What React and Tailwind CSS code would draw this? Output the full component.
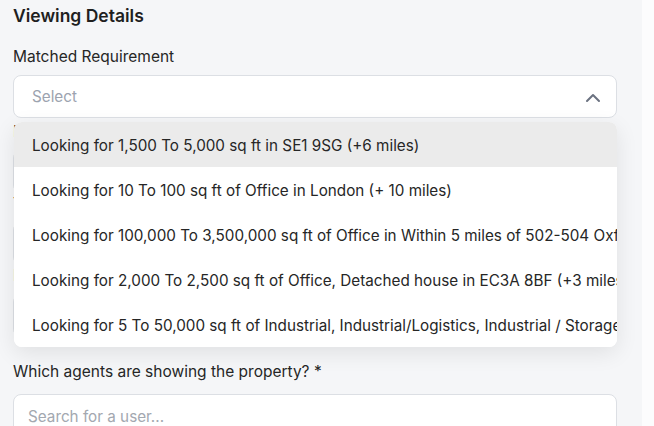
import React from 'react'
import { ChevronUp } from 'lucide-react'

const options = [
  'Looking for 1,500 To 5,000 sq ft in SE1 9SG (+6 miles)',
  'Looking for 10 To 100 sq ft of Office in London (+ 10 miles)',
  'Looking for 100,000 To 3,500,000 sq ft of Office in Within 5 miles of 502-504 Oxford Street, London',
  'Looking for 2,000 To 2,500 sq ft of Office, Detached house in EC3A 8BF (+3 miles)',
  'Looking for 5 To 50,000 sq ft of Industrial, Industrial/Logistics, Industrial / Storage, Warehouse'
]

const MatchedRequirementSelect = () => {
  const active = 0

  return (
    <div className="relative">
      <button className="flex h-[43px] w-full items-center justify-between rounded-lg border border-[#dcdfe4] bg-white pl-[18px] pr-[11px] pt-[2px] text-left">
        <span className="text-[15.25px] text-[#9ca3af]">Select</span>
        <ChevronUp size={24} strokeWidth={2} className="text-[#6b7280]" />
      </button>
      <ul className="absolute left-[1px] right-0 top-[47px] z-10 overflow-hidden rounded-lg bg-white shadow-[0_6px_22px_rgba(0,0,0,0.09)]">
        {options.map((option, i) => (
          <li
            key={option}
            className={`flex h-[45px] items-center overflow-hidden whitespace-nowrap pl-[18px] pt-[3px] text-[15.25px] text-[#262626] ${i === active ? 'bg-[#ebebeb]' : 'bg-white'}`}
          >
            {option}
          </li>
        ))}
      </ul>
    </div>
  )
}

const Field = ({ label }) => (
  <div>
    <label className="block text-[15.5px] leading-[22px] text-[#262626]">{label}</label>
    <div className="mt-[7px] h-[43px] rounded-lg border border-[#dcdfe4] bg-white" />
  </div>
)

export default function App() {
  return (
    <div
      className="flex h-[426px] w-[654px] overflow-hidden bg-[#fcfcfd]"
      style={{ fontFamily: 'Inter, "Noto Sans", sans-serif' }}
    >
      <div className="w-[642px] shrink-0 bg-[#f5f6f8] pl-[13px] pr-[25px] pt-[4px]">
        <h2 className="text-[17.5px] font-semibold leading-[24px] text-[#1f1f1f]">Viewing Details</h2>

        <div className="mt-[18px]">
          <label className="block text-[15.5px] leading-[22px] text-[#262626]">Matched Requirement</label>
          <div className="mt-[7px]">
            <MatchedRequirementSelect />
          </div>
        </div>

        <div className="mt-[3px]">
          <Field label="Date" />
          <Field label="Time" />
          <Field label="Duration" />
        </div>

        <div className="mt-[24px]">
          <label className="block text-[15.5px] leading-[22px] text-[#262626]">
            Which agents are showing the property? *
          </label>
          <input
            className="mt-[11px] h-[43px] w-full rounded-lg border border-[#dcdfe4] bg-white px-[14px] pt-[2px] text-[15.25px] placeholder:text-[#a3a8b0] outline-none"
            placeholder="Search for a user..."
          />
        </div>
      </div>
    </div>
  )
}
